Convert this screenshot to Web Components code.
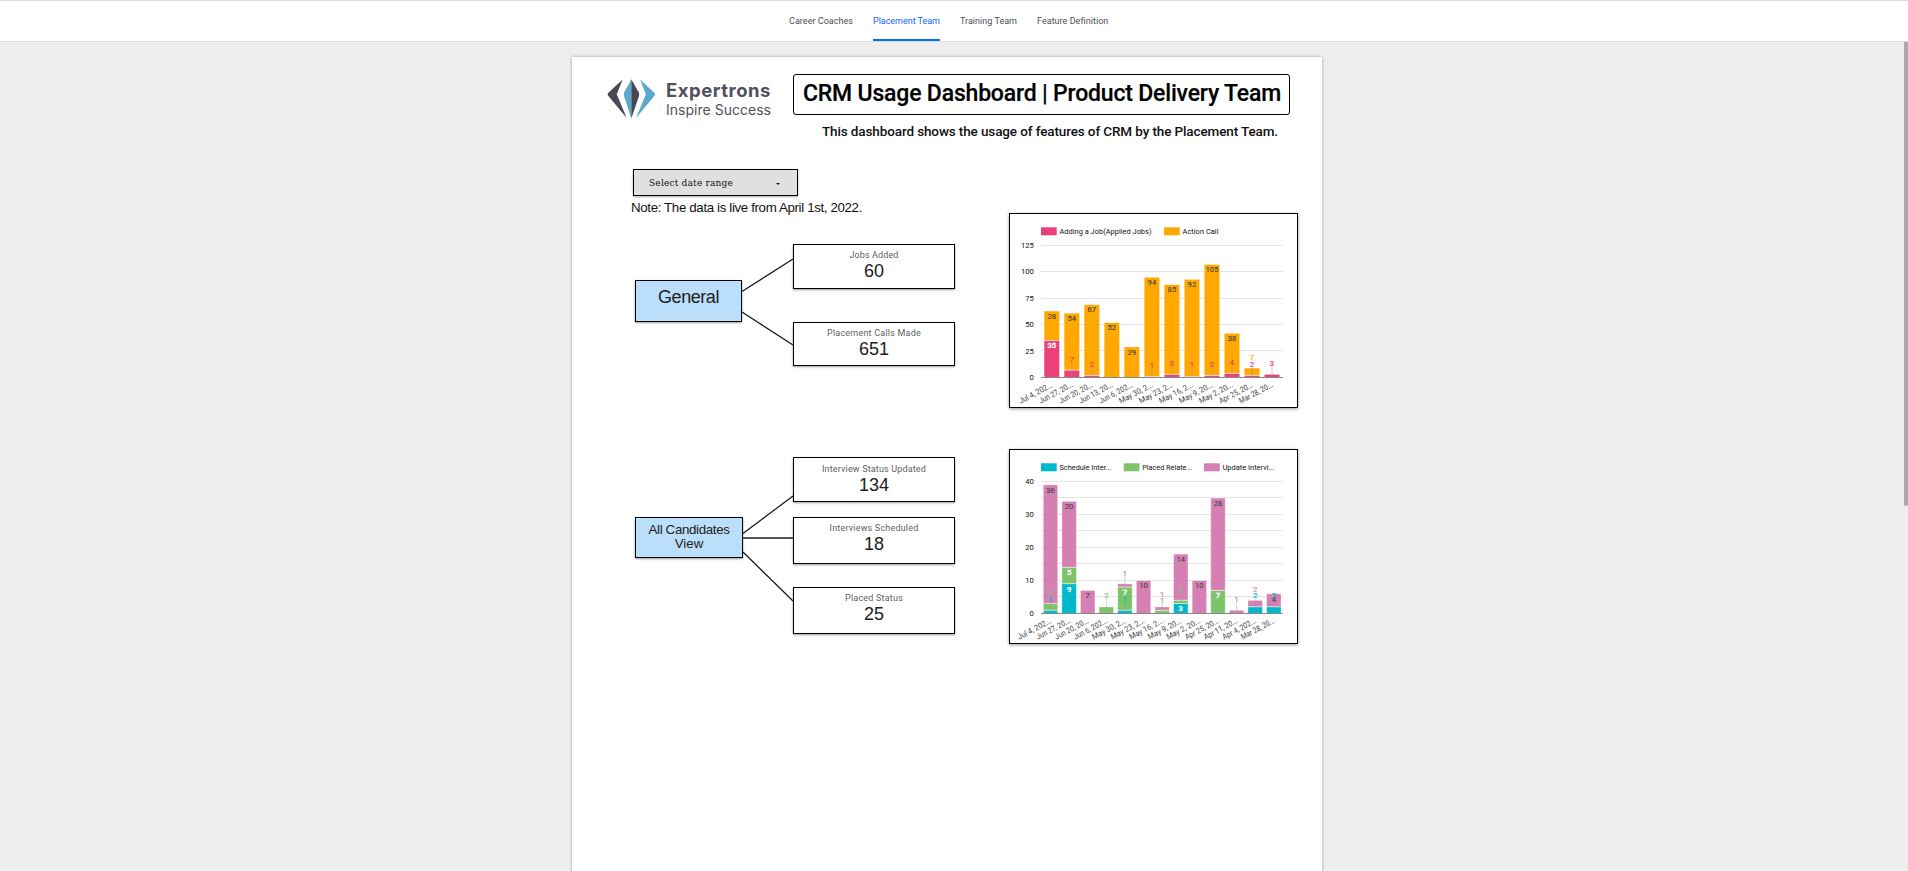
<!DOCTYPE html>
<html lang="en">
<head>
<meta charset="utf-8">
<title>CRM Usage Dashboard</title>
<style>
html,body{margin:0;height:100%;overflow:hidden;background:#eee;font-family:Roboto,sans-serif}
</style>
</head>
<body>
<crm-app></crm-app>
<script>
const define = (name, html, setup) => {
  const t = document.createElement('template');
  t.innerHTML = html;
  customElements.define(name, class extends HTMLElement {
    connectedCallback() {
      if (this.shadowRoot) return;
      this.attachShadow({mode: 'open'}).append(t.content.cloneNode(true));
      if (setup) setup.call(this, this.shadowRoot);
    }
  });
};

// Text tracked so that it fills the width given in its "w" attribute.
define('fit-text', `<style>:host{display:inline-block;white-space:pre}</style><slot></slot>`, function () {
  const w = +this.getAttribute('w');
  const range = document.createRange();
  range.selectNodeContents(this);
  const actual = range.getBoundingClientRect().width;
  this.style.letterSpacing = ((w - actual) / this.textContent.length) + 'px';
});

define('nav-tab', `<style>
:host{display:block;box-sizing:border-box;height:40px;font:400 9px/34px Roboto,sans-serif;color:#4c4f54;padding-top:3px;border-bottom:2px solid transparent}
:host([active]){color:#0f66f5;border-color:#0072f0}
</style><slot></slot>`);

define('tab-bar', `<style>
:host{display:flex;box-sizing:border-box;height:42px;gap:20px;padding-left:789px;background:#fff;border-top:1px solid #dadce0;border-bottom:1px solid #dadce0}
</style><slot></slot>`);

define('brand-logo', `<style>
:host{display:flex;width:163px;height:42px}
svg{flex:none;width:49px;height:40px;overflow:visible}
div{margin-left:10px;color:#50515d;font-family:Inter,sans-serif}
.a{display:block;font:700 18.5px/20px Inter,sans-serif;padding-top:1px}
.b{display:block;font:400 14px/19px Inter,sans-serif}
</style>
<svg viewBox="0 0 49 40">
<path d="M15.7.6 1 14Q0 15.3 1 16.6L19.7 39 9.7 15.3Z" fill="#464954"/>
<path d="M24.3.3 17.2 13.6Q16.6 15.3 17 17L24.3 39.4Z" fill="#5aa8cc"/>
<path d="M24.3.3 31.8 13.6Q32.5 15.3 32 17L24.3 39.4Z" fill="#464954"/>
<path d="M33 .6 47.6 14Q48.6 15.3 47.6 16.6L29 39 38.9 15.3Z" fill="#5aa8cc"/>
</svg>
<div><fit-text class="a" w="105">Expertrons</fit-text><fit-text class="b" w="105">Inspire Success</fit-text></div>`);

define('page-title', `<style>
:host{display:block;box-sizing:border-box;width:497px;height:41px;border:1px solid #000;border-radius:3px;padding-left:9px;font:500 23px/38px Roboto,sans-serif;color:#000;-webkit-text-stroke:.2px #000}
</style><slot></slot>`);

define('date-select', `<style>
:host{display:flex;box-sizing:border-box;width:165px;height:27px;border:1px solid #000;background:#e0e0e0;align-items:center;justify-content:space-between;padding:0 17px 0 15px;font:10px/25px "DejaVu Serif Condensed","DejaVu Serif",serif;font-stretch:condensed;color:#111;box-shadow:0 1px 2px #0005}
i{border:2px solid transparent;border-top-color:#111;border-bottom:0;margin-top:2px}
</style><slot></slot><i></i>`);

define('flow-node', `<style>
:host{display:block;flex:none;box-sizing:border-box;border:1px solid #000;background:#bbdefb;text-align:center;font-family:"Liberation Sans",sans-serif;color:#212121;box-shadow:0 1px 2px #0006}
</style><slot></slot>`);

define('kpi-card', `<style>
:host{display:block;box-sizing:border-box;width:162px;border:1px solid #000;background:#fff;text-align:center;box-shadow:0 1px 2px #0006}
.l{display:block;font:9px/11px Roboto,sans-serif;color:#616161}
.v{display:block;font:18px/20px "Liberation Sans",sans-serif;color:#212121}
</style><span class="l"><slot></slot></span><span class="v"><slot name="value"></slot></span>`);

define('flow-links', `<style>
:host{display:block;flex:none}svg{display:block;overflow:visible}
</style><svg></svg>`, function (r) {
  const s = r.querySelector('svg');
  s.setAttribute('width', this.getAttribute('w'));
  s.setAttribute('height', this.getAttribute('h'));
  s.innerHTML = this.getAttribute('lines').split(';').map(l => {
    const [a, b, c, d, col = '#111', sw = 1.2] = l.split(',');
    return `<line x1="${a}" y1="${b}" x2="${c}" y2="${d}" stroke="${col}" stroke-width="${sw}"/>`;
  }).join('');
});

const PINK = '#ec407a', ORANGE = '#ffa800', TEAL = '#00b8cc', GREEN = '#7cc36a', MAUVE = '#d67fb3';
const charts = {
  calls: {
    max: 125, ticks: [0, 25, 50, 75, 100, 125], labelled: 25, x0: 34.8, pitch: 20.02, bw: 16,
    colors: [PINK, ORANGE],
    legend: [[32, PINK, 'Adding a Job(Applied Jobs)', 92], [155, ORANGE, 'Action Call', 36]],
    cats: ['Jul 4, 202...', 'Jun 27, 20...', 'Jun 20, 20...', 'Jun 13, 20...', 'Jun 6, 202...', 'May 30, 2...', 'May 23, 2...', 'May 16, 2...', 'May 9, 20...', 'May 2, 20...', 'Apr 25, 20...', 'Mar 28, 20...'],
    data: [[35, 28], [7, 54], [2, 67], [0, 52], [0, 29], [1, 94], [3, 85], [1, 92], [2, 105], [4, 38], [2, 7], [3, 0]],
    callouts: [[1, 7, PINK, 149, 163], [2, 2, PINK, 154, 164], [5, 1, PINK, 154.7, 164], [6, 3, PINK, 153, 162], [7, 1, PINK, 154.3, 164], [8, 2, PINK, 154.3, 164], [9, 4, PINK, 151.7, 162], [10, 7, ORANGE, 147, 147], [10, 2, PINK, 154, 163], [11, 3, PINK, 153, 162]]
  },
  candidates: {
    max: 40, ticks: [0, 5, 10, 15, 20, 25, 30, 35, 40], labelled: 10, x0: 34, pitch: 18.61, bw: 15,
    colors: [TEAL, GREEN, MAUVE],
    legend: [[32, TEAL, 'Schedule Inter...', 52], [114.7, GREEN, 'Placed Relate...', 50], [195, MAUVE, 'Update Intervi...', 52]],
    cats: ['Jul 4, 202...', 'Jun 27, 20...', 'Jun 20, 20...', 'Jun 6, 202...', 'May 30, 2...', 'May 23, 2...', 'May 16, 2...', 'May 9, 20...', 'May 2, 20...', 'Apr 25, 20...', 'Apr 11, 20...', 'Apr 4, 202...', 'Mar 28, 20...'],
    data: [[1, 2, 36], [9, 5, 20], [0, 0, 7], [0, 2, 0], [1, 7, 1], [0, 0, 10], [0, 1, 1], [3, 1, 14], [0, 0, 10], [0, 7, 28], [0, 0, 1], [2, 0, 2], [2, 0, 4]],
    callouts: [[0, 2, GREEN, 146, 146], [0, 1, TEAL, 153.3, 163], [3, 2, GREEN, 149, 158], [4, 1, MAUVE, 127, 137], [4, 1, TEAL, 153.3, 163], [6, 1, MAUVE, 148, 148], [6, 1, GREEN, 154, 163], [7, 1, GREEN, 143, 153], [10, 1, MAUVE, 153.3, 163], [11, 2, MAUVE, 143, 143], [11, 2, TEAL, 149, 160], [12, 2, TEAL, 149, 149]]
  }
};

define('stacked-chart', `<style>
:host{display:block;box-sizing:border-box;width:289px;height:195px;border:1px solid #000;background:#fff;box-shadow:0 1px 3px #0006}
svg{display:block;width:287px;height:193px;font-family:Roboto,sans-serif;font-size:7.5px}
</style><svg viewBox="1 1 287 193"></svg>`, function (r) {
  const c = charts[this.getAttribute('data')], base = 164.3, H = 132, y = v => base - v / c.max * H;
  const text = (x, yy, s, w, fill, extra = '') => `<text x="${x}" y="${yy}" fill="${fill}" textLength="${w}" lengthAdjust="spacingAndGlyphs" ${extra}>${s}</text>`;
  const mid = (x, yy, s, fill, extra = '') => { const w = String(s).length * 4.3; return text(x - w / 2, yy, s, w, fill, extra); };
  let o = '';
  for (const [x, col, s, w] of c.legend)
    o += `<rect x="${x}" y="14.3" width="15.7" height="8" fill="${col}"/>` + text(x + 18.5, 21, s, w, '#111');
  for (const t of c.ticks) {
    o += `<rect x="32" y="${Math.round(y(t) - .5)}" width="242" height="1" fill="#e4e4e4"/>`;
    if (t % c.labelled === 0) { const w = String(t).length * 4.3; o += text(24.8 - w, y(t) + 2.7, t, w, '#111'); }
  }
  c.data.forEach((row, i) => {
    const x = c.x0 + i * c.pitch; let sum = 0;
    row.forEach((v, k) => {
      if (!v) return;
      const top = y(sum + v), h = v / c.max * H;
      o += `<rect x="${x + .3}" y="${top + .3}" width="${c.bw - .6}" height="${Math.max(h - .3, .4)}" fill="${c.colors[k]}" stroke="#fff" stroke-opacity=".45" stroke-width=".7"/>`;
      if (h > 9) {
        const last = k === c.colors.length - 1;
        o += mid(x + c.bw / 2, top + 8, v, last ? '#424242' : '#fff', `stroke="${last ? '#424242' : '#fff'}" stroke-width="${last ? .1 : .4}"`);
      }
      sum += v;
    });
  });
  o += `<rect x="32" y="164" width="242" height="1" fill="#888"/>`;
  for (const [i, s, col, ly, end] of c.callouts) {
    const x = c.x0 + i * c.pitch + c.bw / 2;
    if (end > ly) o += `<line x1="${x}" x2="${x}" y1="${ly + .5}" y2="${end}" stroke="#999" stroke-opacity=".6" stroke-width=".8"/>`;
    o += mid(x, ly, s, col, `stroke="${col}" stroke-width=".2"`);
  }
  c.cats.forEach((s, i) => {
    const x = c.x0 + i * c.pitch + c.bw / 2 + 1.5;
    o += `<g transform="translate(${x} 173.5) rotate(-28)">` + text(-37, 0, s, 37, '#444', 'font-size="8"') + `</g>`;
  });
  r.querySelector('svg').innerHTML = o;
});

define('report-page', `<style>
:host{display:block;box-sizing:border-box;width:750px;height:900px;margin:15px 0 0 572px;background:#fff;box-shadow:0 0 3px #0005}
.head{display:flex;height:112px;box-sizing:border-box;padding:17px 0 0 35px}
brand-logo{margin-top:5px;margin-right:23px}
.sub{display:block;margin:6px 0 0 29px;font:500 13.5px/20px Roboto,sans-serif;color:#111}
.main{display:flex;align-items:flex-start}
.left{width:377px;padding-left:60px}
date-select{margin-left:1px}
.note{display:block;font:13.3px/18px "Liberation Sans",sans-serif;color:#111;margin:3px 0 0 -1px}
.flow{display:flex;align-items:flex-start;margin-left:3px}
.one{margin-top:27px}.two{margin-top:91px}
.k{display:flex;flex-direction:column}
.right{display:flex;flex-direction:column;gap:41px;margin-top:44px}
</style>
<div class="head"><brand-logo></brand-logo>
<div><page-title><fit-text w="478">CRM Usage Dashboard | Product Delivery Team</fit-text></page-title>
<fit-text class="sub" w="456">This dashboard shows the usage of features of CRM by the Placement Team.</fit-text></div></div>
<div class="main"><div class="left">
<date-select><fit-text w="84">Select date range</fit-text></date-select>
<fit-text class="note" w="231">Note: The data is live from April 1st, 2022.</fit-text>
<div class="flow one">
<flow-node style="width:107px;height:42px;margin-top:36px;font-size:18px;line-height:32px"><fit-text w="61">General</fit-text></flow-node>
<flow-links w="51" h="122" lines="0,47.5,51,15;0,68,51,101"></flow-links>
<div class="k">
<kpi-card style="height:45px;padding-top:5px;margin-bottom:33px"><fit-text w="49">Jobs Added</fit-text><span slot="value">60</span></kpi-card>
<kpi-card style="height:44px;padding-top:5px"><fit-text w="94">Placement Calls Made</fit-text><span slot="value">651</span></kpi-card></div>
</div>
<div class="flow two">
<flow-node style="width:108px;height:41px;margin-top:60px;font-size:13.3px;line-height:14px;padding-top:5px;box-sizing:border-box"><fit-text w="81">All Candidates</fit-text><br>View</flow-node>
<flow-links w="50" h="177" lines="0,76.5,50,39;0,81,50,81,#555,2;0,95,50,144"></flow-links>
<div class="k">
<kpi-card style="height:45px;padding-top:6px;margin-bottom:15px"><fit-text w="104">Interview Status Updated</fit-text><span slot="value">134</span></kpi-card>
<kpi-card style="height:47px;padding-top:5px;margin-bottom:23px"><fit-text w="89">Interviews Scheduled</fit-text><span slot="value">18</span></kpi-card>
<kpi-card style="height:47px;padding-top:5px"><fit-text w="58">Placed Status</fit-text><span slot="value">25</span></kpi-card></div>
</div></div>
<div class="right"><stacked-chart data="calls"></stacked-chart><stacked-chart data="candidates"></stacked-chart></div></div>`);

define('crm-app', `<style>
:host{display:block;height:871px;overflow:hidden;background:#eee}
.body{display:flex;justify-content:space-between;height:829px;overflow:hidden}
.thumb{width:4px;height:464px;background:#aaa;border-radius:0 0 2px 2px}
</style>
<tab-bar><nav-tab><fit-text w="64">Career Coaches</fit-text></nav-tab><nav-tab active><fit-text w="67">Placement Team</fit-text></nav-tab><nav-tab><fit-text w="57">Training Team</fit-text></nav-tab><nav-tab><fit-text w="71">Feature Definition</fit-text></nav-tab></tab-bar>
<div class="body"><report-page></report-page><div class="thumb"></div></div>`);
</script>
</body>
</html>
